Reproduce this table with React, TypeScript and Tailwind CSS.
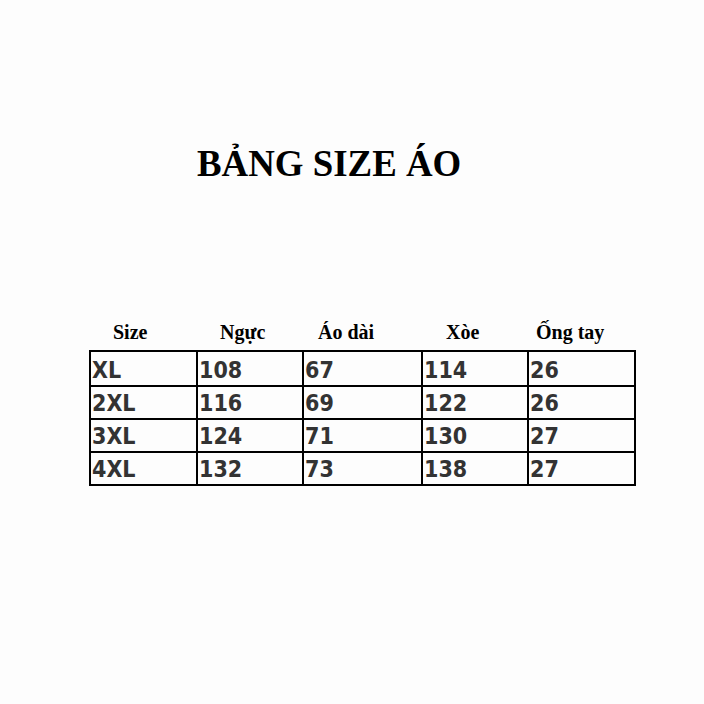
const rows = [
  ["XL", "108", "67", "114", "26"],
  ["2XL", "116", "69", "122", "26"],
  ["3XL", "124", "71", "130", "27"],
  ["4XL", "132", "73", "138", "27"],
];

const headers = [
  { label: "Size", pad: "pl-[24px]", w: "w-[107px]" },
  { label: "Ngực", pad: "pl-[24px]", w: "w-[106px]" },
  { label: "Áo dài", pad: "pl-[16px]", w: "w-[119px]" },
  { label: "Xòe", pad: "pl-[25px]", w: "w-[106px]" },
  { label: "Ống tay", pad: "pl-[9px]", w: "w-[107px]" },
];

const colW = ["w-[107px]", "w-[106px]", "w-[119px]", "w-[106px]", "w-[107px]"];

const App = () => {
  return (
    <div className="w-[704px] h-[704px] bg-[#fdfdfd] overflow-hidden">
      <div className="pt-[139px] pl-[197px]">
        <h1 className="font-['Liberation_Serif',serif] font-bold text-[38px] leading-[48px] text-black scale-x-[0.97] origin-left">
          BẢNG SIZE ÁO
        </h1>
      </div>

      <div className="mt-[130px] ml-[89px] w-[545px]">
        {/* header row sits above the table, no borders */}
        <div className="flex h-[30px] items-center">
          {headers.map((h) => (
            <div
              key={h.label}
              className={`${h.w} ${h.pad} font-['Liberation_Serif',serif] font-bold text-[20px] text-black`}
            >
              {h.label}
            </div>
          ))}
        </div>
        <table className="border-collapse table-fixed w-[545px] mt-[3px]">
          <tbody>
            {rows.map((r, ri) => (
              <tr key={r[0]} className={ri === 0 ? "h-[35px]" : "h-[33px]"}>
                {r.map((c, i) => (
                  <td
                    key={i}
                    className={`${colW[i]} border-2 border-black p-0 pl-[1px] align-bottom font-['DejaVu_Sans_Condensed','DejaVu_Sans',sans-serif] [font-stretch:condensed] font-bold text-[23px] leading-[29px] text-[#333333]`}
                  >
                    {c}
                  </td>
                ))}
              </tr>
            ))}
          </tbody>
        </table>
      </div>
    </div>
  );
};

export default App;
